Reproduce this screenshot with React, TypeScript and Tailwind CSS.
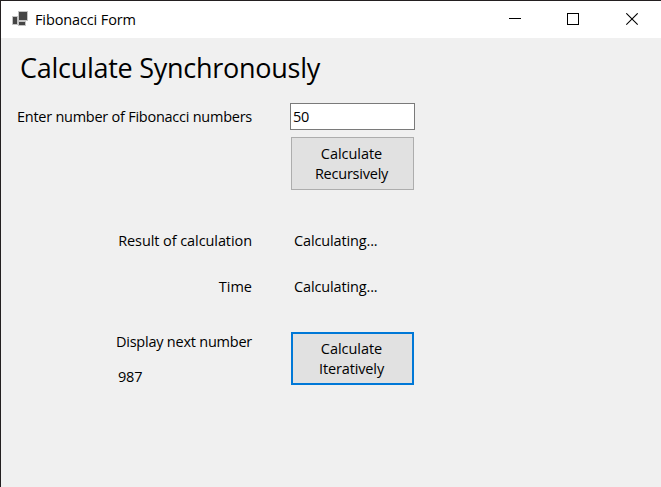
function FormIcon() {
  return (
    <svg width="18" height="17" viewBox="0 0 18 17" shapeRendering="crispEdges">
      <g fill="#c4c4c4">
        <rect x="1" y="5" width="7" height="9" />
        <rect x="7" y="0" width="10" height="10" />
        <rect x="7" y="10" width="8" height="5" />
      </g>
      <g fill="#454545">
        <rect x="2" y="6" width="4" height="7" />
        <rect x="8" y="1" width="8" height="8" />
        <rect x="8" y="11" width="6" height="3" />
      </g>
    </svg>
  );
}

function TitleBar() {
  return (
    <header className="flex h-[37px] items-center bg-white pl-[10px]">
      <FormIcon />
      <h1 className="ml-[6px] text-[14.5px] leading-5 tracking-[-0.12px]">Fibonacci Form</h1>
      <div className="ml-auto flex items-center pr-[22px]">
        <svg className="mr-[45px]" width="13" height="13" viewBox="0 0 13 13" shapeRendering="crispEdges">
          <path d="M0 5.5H12" stroke="#000" />
        </svg>
        <svg className="mr-[46px]" width="13" height="13" viewBox="0 0 13 13" shapeRendering="crispEdges">
          <rect x="0.5" y="0.5" width="11" height="11" fill="none" stroke="#000" />
        </svg>
        <svg width="13" height="13" viewBox="0 0 13 13">
          <path d="M0.3 0.3L11.7 11.7M11.7 0.3L0.3 11.7" stroke="#000" strokeWidth="1.1" />
        </svg>
      </div>
    </header>
  );
}

export default function App() {
  return (
    <div className="h-[487px] w-[661px] overflow-hidden border-t border-l border-[#231f20] bg-[#f0f0f0] font-['Open_Sans','Noto_Sans',sans-serif] text-[14.5px] leading-5 text-black">
      <TitleBar />
      <main>
        <h2 className="pt-[12px] pl-[19px] text-[27px] leading-[36px] tracking-[-0.27px]">Calculate Synchronously</h2>

        <section className="mt-[17px] flex">
          <label htmlFor="count" className="w-[251px] shrink-0 pt-[4px] text-right tracking-[-0.25px]">
            Enter number of Fibonacci numbers
          </label>
          <div className="ml-[38px] flex flex-col gap-[7px]">
            <input
              id="count"
              defaultValue="50"
              className="h-[27px] w-[125px] border border-[#7a7a7a] bg-white px-[2px] leading-5 tracking-[-0.3px] outline-none"
            />
            <button className="ml-px h-[53px] w-[123px] border border-[#adadad] bg-[#e1e1e1] pr-[2px]">
              <span className="block tracking-[-0.05px]">Calculate</span>
              <span className="block tracking-[-0.23px]">Recursively</span>
            </button>
          </div>
        </section>

        <section className="mt-[41px] flex flex-col gap-[26px]">
          <div className="flex gap-[42px]">
            <span className="w-[251px] text-right tracking-[-0.08px]">Result of calculation</span>
            <span className="tracking-[-0.14px]">Calculating...</span>
          </div>
          <div className="flex gap-[42px]">
            <span className="w-[251px] text-right">Time</span>
            <span className="tracking-[-0.14px]">Calculating...</span>
          </div>
        </section>

        <section className="mt-[35px] flex">
          <div className="flex w-[251px] flex-col gap-[15px]">
            <span className="text-right tracking-[-0.23px]">Display next number</span>
            <span className="pl-[117px] tracking-[-0.2px]">987</span>
          </div>
          <button className="ml-[39px] h-[53px] w-[123px] border-2 border-[#0078d7] bg-[#e1e1e1] pr-[2px]">
            <span className="block tracking-[-0.05px]">Calculate</span>
            <span className="block tracking-[-0.13px]">Iteratively</span>
          </button>
        </section>
      </main>
    </div>
  );
}
